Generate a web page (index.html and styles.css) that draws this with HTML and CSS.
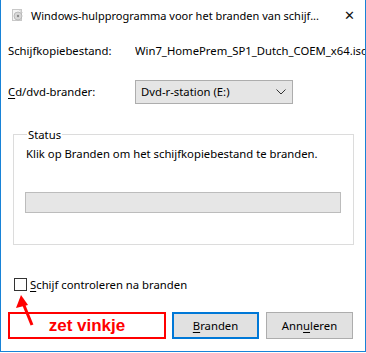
FILE: index.html
```html
<!DOCTYPE html>
<html lang="nl">
<head>
  <meta charset="UTF-8">
  <title>Windows-hulpprogramma voor het branden van schijfkopieën</title>
  <link rel="stylesheet" href="styles.css">
</head>
<body>
  <div class="window">
    <div class="titlebar">
      <svg class="app-icon" width="12" height="12" viewBox="0 0 12 12">
        <rect x="0.5" y="0.5" width="9" height="11" fill="#f4f4f4" stroke="#c8c8c8"/>
        <path d="M7 0.5 L10.5 4" stroke="#c8c8c8" fill="none"/>
        <circle cx="6" cy="7" r="4" fill="#d8d8d8" stroke="#b0b0b0" stroke-width="0.8"/>
        <circle cx="6" cy="7" r="1.2" fill="#8a8a8a"/>
      </svg>
      <span class="title">Windows-hulpprogramma voor het branden van schijf...</span>
      <span class="close">&#x2715;</span>
    </div>

    <div class="content">
      <div class="row file-row">
        <span class="label">Schijfkopiebestand:</span>
        <span class="value">Win7_HomePrem_SP1_Dutch_COEM_x64.iso</span>
      </div>

      <div class="row drive-row">
        <span class="label"><u>C</u>d/dvd-brander:</span>
        <div class="select">
          <span>Dvd-r-station (E:)</span>
          <svg width="10" height="6" viewBox="0 0 10 6"><path d="M0.5 0.5 L5 5 L9.5 0.5" stroke="#333" fill="none"/></svg>
        </div>
      </div>

      <fieldset class="status">
        <legend>Status</legend>
        <p class="status-text">Klik op Branden om het schijfkopiebestand te branden.</p>
        <div class="progress"></div>
      </fieldset>

      <label class="check">
        <span class="box"></span>
        <span><u>S</u>chijf controleren na branden</span>
      </label>

      <div class="bottom">
        <div class="note">zet vinkje</div>
        <button class="btn primary"><u>B</u>randen</button>
        <button class="btn">Ann<u>u</u>leren</button>
      </div>
    </div>

    <svg class="arrow" width="40" height="50" viewBox="0 0 40 50">
      <path d="M31 38 L22 16" stroke="#ff0000" stroke-width="3" fill="none"/>
      <path d="M20 8 L15 21 L27 18 Z" fill="#ff0000"/>
    </svg>
  </div>
</body>
</html>
```

FILE: styles.css
```css
* {
  box-sizing: border-box;
}

body {
  margin: 0;
  background: #ffffff;
  font-family: "Noto Sans", "Open Sans", sans-serif;
  font-size: 11.3px;
  color: #000;
}

u {
  text-decoration: underline;
  text-underline-offset: 2px;
}

.window {
  position: relative;
  width: 366px;
  height: 352px;
  border: 1px solid #1883d7;
  border-top: none;
  background: #fff;
  overflow: hidden;
}

.titlebar {
  display: flex;
  align-items: center;
  height: 30px;
  padding-left: 11px;
}

.app-icon {
  flex: none;
  margin-right: 7px;
}

.title {
  flex: 1;
  min-width: 0;
  font-size: 11px;
  white-space: nowrap;
}

.close {
  flex: none;
  width: 32px;
  text-align: center;
  font-size: 13px;
  color: #111;
}

.content {
  padding: 0 0 0 7px;
}

.row {
  display: flex;
  align-items: center;
}

.file-row {
  height: 40px;
  white-space: nowrap;
}

.label {
  flex: none;
  width: 127px;
}

.value {
  overflow: hidden;
  font-size: 11.3px;
}

.drive-row {
  height: 43px;
}

.select {
  display: flex;
  align-items: center;
  justify-content: space-between;
  width: 158px;
  height: 24px;
  padding: 0 6px 0 5px;
  background: #e5e5e5;
  border: 1px solid #adadad;
}

.status {
  margin: 14px 0 0 5px;
  width: 341px;
  height: 118px;
  padding: 0 11px;
  border: 1px solid #dcdcdc;
}

.status legend {
  padding: 0 1px;
  margin-left: 2px;
}

.status-text {
  margin: 4px 0 0 1px;
}

.progress {
  margin-top: 31px;
  height: 21px;
  width: 316px;
  background: #e6e6e6;
  border: 1px solid #bcbcbc;
}

.check {
  display: flex;
  align-items: center;
  gap: 3px;
  margin: 32px 0 0 6px;
}

.box {
  width: 13px;
  height: 13px;
  border: 1px solid #333;
  background: #fff;
}

.bottom {
  display: flex;
  align-items: center;
  margin-top: 20px;
}

.note {
  width: 158px;
  height: 27px;
  border: 2px solid #ff0000;
  color: #ff0000;
  font-family: "Liberation Sans", Arial, sans-serif;
  font-weight: bold;
  font-size: 17px;
  line-height: 23px;
  text-align: center;
  margin-right: 6px;
}

.btn {
  width: 87px;
  height: 27px;
  margin-right: 7px;
  background: #e1e1e1;
  border: 1px solid #adadad;
  font-family: inherit;
  font-size: 11.3px;
  color: #000;
  padding: 0;
}

.btn.primary {
  border: 2px solid #0078d7;
}

.arrow {
  position: absolute;
  left: 0;
  top: 287px;
}
```
